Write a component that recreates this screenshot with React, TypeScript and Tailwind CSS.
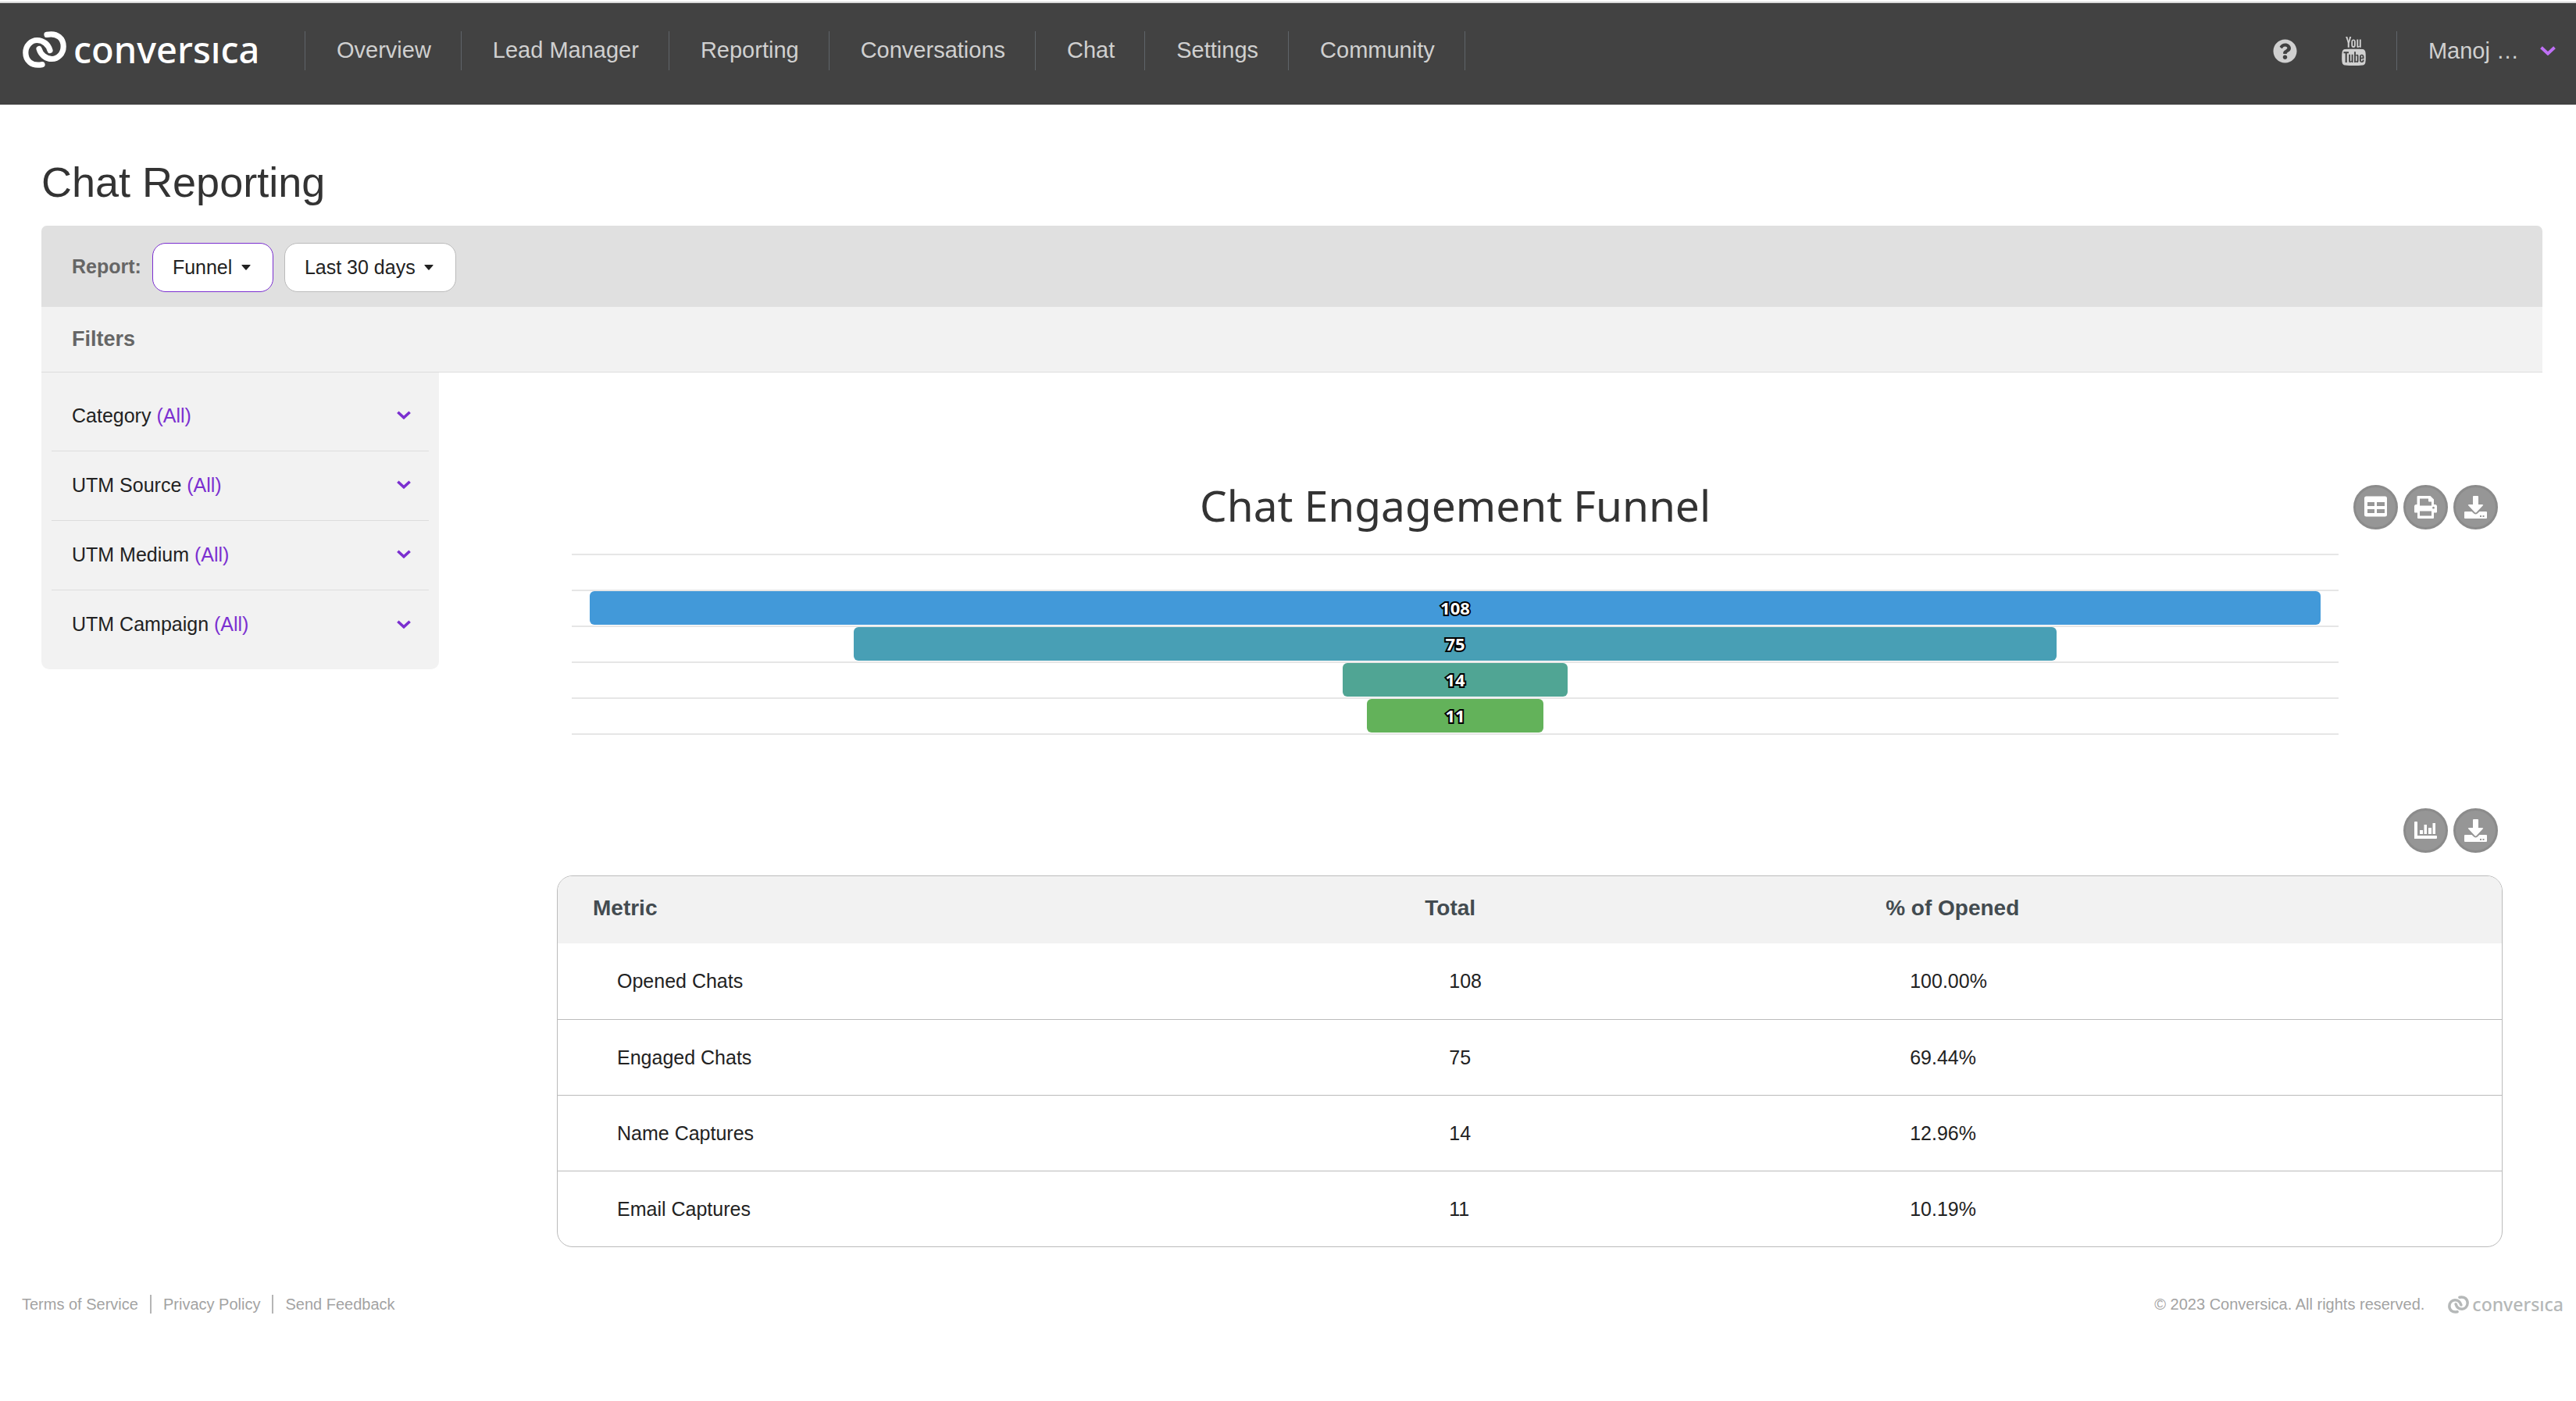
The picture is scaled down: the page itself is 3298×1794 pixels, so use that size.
import { FaQuestionCircle } from 'react-icons/fa'
import { TfiYoutube } from 'react-icons/tfi'

const navItems = ['Overview', 'Lead Manager', 'Reporting', 'Conversations', 'Chat', 'Settings', 'Community']

const filters = ['Category', 'UTM Source', 'UTM Medium', 'UTM Campaign']

const metrics = [
    { name: 'Opened Chats', total: 108, percent: '100.00%', color: 'bg-[#4299d9]' },
    { name: 'Engaged Chats', total: 75, percent: '69.44%', color: 'bg-[#489fb5]' },
    { name: 'Name Captures', total: 14, percent: '12.96%', color: 'bg-[#50a594]' },
    { name: 'Email Captures', total: 11, percent: '10.19%', color: 'bg-[#63b25a]' },
]

const maxTotal = 108

const Rings = ({ className }: { className: string }) => (
    <svg className={className} viewBox="0 0 56 47" fill="none" stroke="currentColor" strokeWidth="7.2" strokeLinecap="round">
        <path d="M25 42.6 C11 45.5 3.8 37 3.8 27.5 C3.8 18 11 11.5 18.5 11.5 C27 11.5 33 17.5 35 24.5" />
        <path d="M31 4.4 C45 1.5 52.2 10 52.2 19.5 C52.2 29 45 35.5 37.5 35.5 C29 35.5 23 29.5 21 22.5" />
    </svg>
)

const Chevron = ({ className }: { className: string }) => (
    <svg className={className} viewBox="0 0 20 12" fill="none" stroke="currentColor" strokeWidth="4">
        <path d="M1.5 1.8 L10 9.6 L18.5 1.8" />
    </svg>
)

const Caret = () => (
    <svg className="pointer-events-none absolute right-[29px] top-[28px] h-[7px] w-[12px]" viewBox="0 0 12 7" fill="#222222">
        <path d="M0.8 0 H11.2 Q12 0.2 11.4 1 L6.6 6.4 Q6 7 5.4 6.4 L0.6 1 Q0 0.2 0.8 0 Z" />
    </svg>
)

const TableIcon = () => (
    <svg className="h-[29px] w-[29px]" viewBox="0 0 29 29" fill="white" fillRule="evenodd">
        <path d="M2.5 0.5 H26.5 Q29 0.5 29 3 V24 Q29 26.5 26.5 26.5 H2.5 Q0 26.5 0 24 V3 Q0 0.5 2.5 0.5 Z M4 8 V13 H13 V8 Z M16 8 V13 H26 V8 Z M4 17 V22 H13 V17 Z M16 17 V22 H26 V17 Z" />
    </svg>
)

const PrintIcon = () => (
    <svg className="h-[29px] w-[29px]" viewBox="0 0 29 29" fill="white" fillRule="evenodd">
        <path d="M4.5 0 H20.5 L25 4.5 V11 H26.5 Q29 11 29 13.5 V20.5 Q29 21.5 28 21.5 H25 V28 Q25 29 24 29 H5 Q4 29 4 28 V21.5 H1 Q0 21.5 0 20.5 V13.5 Q0 11 2.5 11 H3.5 V1 Q3.5 0 4.5 0 Z M7 3.6 V12.5 H22 V7.5 H19 Q18 7.5 18 6.5 V3.6 Z M7 19.5 V25.5 H22 V19.5 Z M24.5 13.8 a1.4 1.4 0 1 0 0.01 0 Z" />
    </svg>
)

const DownloadIcon = () => (
    <svg className="h-[29px] w-[29px]" viewBox="0 0 29 29" fill="white" fillRule="evenodd">
        <path d="M12 0 H17 Q18 0 18 1 V11 H23 Q25 11 23.6 12.6 L15.4 21.2 Q14.5 22 13.6 21.2 L5.4 12.6 Q4 11 6 11 H11 V1 Q11 0 12 0 Z" />
        <path d="M1 20 H9.5 L12.5 22.8 Q14.5 24.4 16.5 22.8 L19.5 20 H28 Q29 20 29 21 V28 Q29 29 28 29 H1 Q0 29 0 28 V21 Q0 20 1 20 Z M20 25 V27 H22 V25 Z M23.5 25 V27 H25.5 V25 Z" />
    </svg>
)

const ChartIcon = () => (
    <svg className="h-[29px] w-[29px]" viewBox="0 0 29 29" fill="white">
        <path d="M1 3 H3 Q4 3 4 4 V21 H28 Q29 21 29 22 V24 Q29 25 28 25 H0 V4 Q0 3 1 3 Z" />
        <path d="M7 14 H11 V19 H7 Z M12.5 7 H16 V19 H12.5 Z M18 11 H22 V19 H18 Z M23.5 5 H27 V19 H23.5 Z" />
    </svg>
)

const RoundButton = ({ label, children }: { label: string; children: React.ReactNode }) => (
    <button
        type="button"
        aria-label={label}
        className="flex h-[57px] w-[57px] items-center justify-center rounded-full border-3 border-[#8b8b8b] bg-[#969696]"
    >
        {children}
    </button>
)

const Header = () => (
    <header className="mt-[2px] flex h-[132px] items-start border-t-2 border-[#d8d8d8] bg-[#424242] pt-[36px] font-['Liberation_Sans',sans-serif] text-[29px] leading-[50px] text-[#d0d0d0]">
        <a href="#" aria-label="conversica" className="ml-[29px] mr-[59px] flex items-start text-white">
            <Rings className="h-[47px] w-[56px]" />
            <span className="ml-[9px] w-[237px] font-['Noto_Sans',sans-serif] text-[47px] font-medium leading-[46px]">conversıca</span>
        </a>
        <nav className="flex border-l border-[#5f6469]">
            {navItems.map((item) => (
                <a key={item} href="#" className="h-[50px] border-r border-[#5f6469] pl-10 pr-[38px] leading-[48px]">
                    {item}
                </a>
            ))}
        </nav>
        <div className="ml-auto flex h-[50px] items-center">
            <a href="#" aria-label="Help" className="mr-[54px]">
                <FaQuestionCircle className="h-[31px] w-[31px]" />
            </a>
            <a href="#" aria-label="YouTube" className="mr-[36px]">
                <TfiYoutube className="h-[37px] w-[37px]" />
            </a>
            <button type="button" className="flex h-[50px] items-center border-l border-[#5f6469] pl-10 pr-[26px]">
                <span className="mr-[27px] leading-[48px]">Manoj …</span>
                <Chevron className="h-[12px] w-[20px] text-[#bf70f5]" />
            </button>
        </div>
    </header>
)

const Filters = () => (
    <aside className="w-[509px] shrink-0 self-start rounded-b-[10px] bg-[#f2f2f2] px-[13px] py-[12px]">
        {filters.map((name) => (
            <button
                key={name}
                type="button"
                className="flex h-[89px] w-full items-center justify-between border-b border-[#dddddd] pb-[3px] pl-[26px] pr-[23px] text-[25px] leading-[30px] text-[#222222] last:border-b-0"
            >
                <span>
                    {name} <span className="text-[#7b2fd0]">(All)</span>
                </span>
                <Chevron className="h-[11px] w-[18px] text-[#7b2fd0]" />
            </button>
        ))}
    </aside>
)

const Funnel = () => (
    <section className="flex items-start gap-[19px] pl-[19px] pr-[6px]">
        <div className="flex-1 font-['Noto_Sans',sans-serif]">
            <h2 className="text-center text-[55px] leading-[52px] text-[#333333]">Chat Engagement Funnel</h2>
            <div className="mt-[36px] border-b-2 border-[#e6e6e6]">
                <div className="h-[46px] border-t-2 border-[#e6e6e6]" />
                {metrics.map((m) => (
                    <div key={m.name} className="flex h-[46px] justify-center border-t-2 border-[#e6e6e6]">
                        <div
                            className={`${m.color} h-[43px] rounded-[6px] text-center text-[22px] font-bold leading-[43px] text-white [paint-order:stroke_fill] [-webkit-text-stroke:4px_black]`}
                            style={{ width: `${(m.total / maxTotal) * 98}%` }}
                        >
                            {m.total}
                        </div>
                    </div>
                ))}
            </div>
        </div>
        <div className="flex gap-[7px]">
            <RoundButton label="View data table"><TableIcon /></RoundButton>
            <RoundButton label="Print chart"><PrintIcon /></RoundButton>
            <RoundButton label="Download chart"><DownloadIcon /></RoundButton>
        </div>
    </section>
)

const MetricsTable = () => (
    <section>
        <div className="mt-[94px] flex justify-end gap-[7px] pr-[6px]">
            <RoundButton label="View chart"><ChartIcon /></RoundButton>
            <RoundButton label="Download table"><DownloadIcon /></RoundButton>
        </div>
        <div className="mt-[29px] overflow-hidden rounded-[20px] border border-[#bbbbbb]">
            <table className="w-full table-fixed text-left">
                <thead className="bg-[#f2f2f2] text-[28px] leading-[32px] text-[#434b50]">
                    <tr className="h-[86px]">
                        <th className="w-[42.8%] pb-1 pl-[45px]">Metric</th>
                        <th className="w-[23.7%] pb-1 pl-[45px]">Total</th>
                        <th className="pb-1 pl-[45px]">% of Opened</th>
                    </tr>
                </thead>
                <tbody className="text-[25px] leading-[30px] text-[#222222]">
                    {metrics.map((m) => (
                        <tr key={m.name} className="h-[97px] border-b border-[#bbbbbb] last:border-b-0">
                            <td className="pl-[76px]">{m.name}</td>
                            <td className="pl-[76px]">{m.total}</td>
                            <td className="pl-[76px]">{m.percent}</td>
                        </tr>
                    ))}
                </tbody>
            </table>
        </div>
    </section>
)

const Footer = () => (
    <footer className="mt-[61px] flex items-center pb-8 pl-7 pr-4 text-[20px] leading-[24px] text-[#a3a3a3]">
        <a href="#" className="border-r-2 border-[#b5b5b5] pr-[15px]">Terms of Service</a>
        <a href="#" className="border-r-2 border-[#b5b5b5] px-[15px]">Privacy Policy</a>
        <a href="#" className="pl-[15px]">Send Feedback</a>
        <span className="ml-auto mr-[30px]">© 2023 Conversica. All rights reserved.</span>
        <a href="#" aria-label="conversica" className="flex items-center text-[#b5b8b8]">
            <Rings className="h-[23px] w-[27px]" />
            <span className="ml-1 font-['Noto_Sans',sans-serif] text-[23px] font-medium leading-[24px]">conversıca</span>
        </a>
    </footer>
)

const App = () => {
    return (
        <div className="min-h-screen bg-white font-['Liberation_Sans',Arial,sans-serif]">
            <Header />
            <main className="pl-[53px] pr-[43px] pt-[67px]">
                <h1 className="text-[54px] leading-[64px] text-[#333333]">Chat Reporting</h1>
                <div className="mt-6 flex h-[104px] items-center rounded-t-[7px] bg-[#e0e0e0] pl-[39px] pt-[3px] text-[25px]">
                    <label htmlFor="report" className="mr-[14px] pb-1 font-bold leading-[30px] text-[#666666]">Report:</label>
                    <div className="relative mr-[14px]">
                        <select
                            id="report"
                            className="h-[63px] w-[155px] appearance-none rounded-[17px] border border-[#7b2fd0] bg-white pl-[25px] text-[#222222]"
                        >
                            <option>Funnel</option>
                        </select>
                        <Caret />
                    </div>
                    <div className="relative">
                        <select
                            aria-label="Date range"
                            className="h-[63px] w-[220px] appearance-none rounded-[17px] border border-[#bbbbbb] bg-white pl-[25px] text-[#222222]"
                        >
                            <option>Last 30 days</option>
                        </select>
                        <Caret />
                    </div>
                </div>
                <h3 className="h-[84px] border-b border-[#dddddd] bg-[#f2f2f2] pl-[39px] text-[27px] font-bold leading-[82px] text-[#666666]">
                    Filters
                </h3>
                <div className="flex">
                    <Filters />
                    <div className="ml-[151px] mr-[51px] min-w-0 flex-1 pt-[144px]">
                        <Funnel />
                        <MetricsTable />
                    </div>
                </div>
            </main>
            <Footer />
        </div>
    )
}

export default App
